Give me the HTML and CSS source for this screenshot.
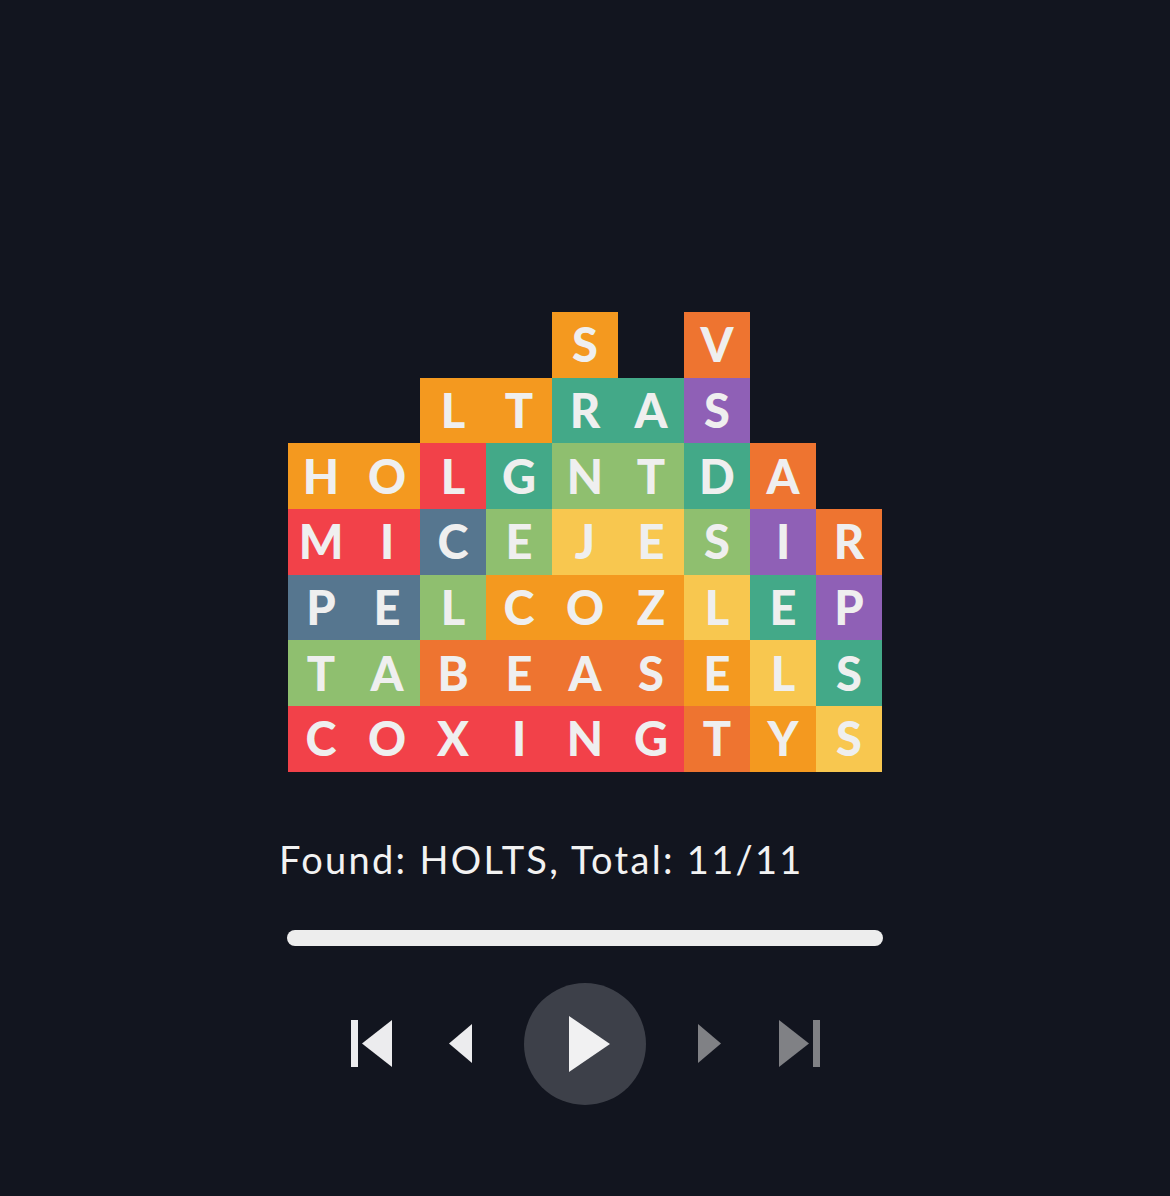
FILE: index.html
```html
<!DOCTYPE html>
<html lang="en">
<head>
<meta charset="utf-8">
<title>Word Puzzle</title>
<link rel="stylesheet" href="styles.css">
</head>
<body>
<main class="app">
  <section class="board">
    <div class="cell"></div><div class="cell"></div><div class="cell"></div><div class="cell"></div>
    <div class="cell orange">S</div><div class="cell"></div><div class="cell dorange">V</div><div class="cell"></div><div class="cell"></div>

    <div class="cell"></div><div class="cell"></div>
    <div class="cell orange">L</div><div class="cell orange">T</div><div class="cell teal">R</div><div class="cell teal">A</div><div class="cell purple">S</div>
    <div class="cell"></div><div class="cell"></div>

    <div class="cell orange">H</div><div class="cell orange">O</div><div class="cell red">L</div><div class="cell teal">G</div><div class="cell green">N</div><div class="cell green">T</div><div class="cell teal">D</div><div class="cell dorange">A</div><div class="cell"></div>

    <div class="cell red">M</div><div class="cell red">I</div><div class="cell slate">C</div><div class="cell green">E</div><div class="cell yellow">J</div><div class="cell yellow">E</div><div class="cell green">S</div><div class="cell purple">I</div><div class="cell dorange">R</div>

    <div class="cell slate">P</div><div class="cell slate">E</div><div class="cell green">L</div><div class="cell orange">C</div><div class="cell orange">O</div><div class="cell orange">Z</div><div class="cell yellow">L</div><div class="cell teal">E</div><div class="cell purple">P</div>

    <div class="cell green">T</div><div class="cell green">A</div><div class="cell dorange">B</div><div class="cell dorange">E</div><div class="cell dorange">A</div><div class="cell dorange">S</div><div class="cell orange">E</div><div class="cell yellow">L</div><div class="cell teal">S</div>

    <div class="cell red">C</div><div class="cell red">O</div><div class="cell red">X</div><div class="cell red">I</div><div class="cell red">N</div><div class="cell red">G</div><div class="cell dorange">T</div><div class="cell orange">Y</div><div class="cell yellow">S</div>
  </section>

  <section class="status">
    <p class="found">Found: HOLTS, Total: 11/11</p>
    <div class="progress"></div>
  </section>

  <nav class="controls">
    <button class="btn skip-back" aria-label="First">
      <svg width="41" height="47" viewBox="0 0 41 47"><rect x="0" y="0" width="7" height="47" fill="#ECECEE"/><polygon points="11,23.5 41,0 41,47" fill="#ECECEE"/></svg>
    </button>
    <button class="btn prev" aria-label="Previous">
      <svg width="23" height="39" viewBox="0 0 23 39"><polygon points="0,19.5 23,0 23,39" fill="#ECECEE"/></svg>
    </button>
    <button class="btn play" aria-label="Play">
      <svg width="41" height="56" viewBox="0 0 41 56"><polygon points="0,0 41,28 0,56" fill="#F1F1F2"/></svg>
    </button>
    <button class="btn next" aria-label="Next">
      <svg width="23" height="39" viewBox="0 0 23 39"><polygon points="0,0 23,19.5 0,39" fill="#808185"/></svg>
    </button>
    <button class="btn skip-fwd" aria-label="Last">
      <svg width="41" height="47" viewBox="0 0 41 47"><polygon points="0,0 30,23.5 0,47" fill="#808185"/><rect x="34" y="0" width="7" height="47" fill="#808185"/></svg>
    </button>
  </nav>
</main>
</body>
</html>
```
FILE: styles.css
```css
html, body {
  margin: 0;
  padding: 0;
  background: #12151F;
}

.app {
  width: 1170px;
  height: 1196px;
  display: flex;
  flex-direction: column;
  align-items: center;
  padding-top: 312px;
  box-sizing: border-box;
}

.board {
  display: grid;
  grid-template-columns: repeat(9, 66px);
  grid-auto-rows: 65.7px;
}

.cell {
  display: flex;
  align-items: center;
  justify-content: center;
  font-family: "Lato", "Open Sans", sans-serif;
  font-weight: 900;
  font-size: 47px;
  color: #EFEFEF;
  line-height: 1;
}

.orange { background: #F4991F; }
.dorange { background: #EE7430; }
.teal { background: #43A988; }
.purple { background: #8F60B6; }
.red { background: #F24149; }
.green { background: #8FBF6F; }
.slate { background: #56768F; }
.yellow { background: #F8C74F; }

.status {
  width: 612px;
  display: flex;
  flex-direction: column;
  margin-top: 64px;
}

.found {
  margin: 0;
  font-family: "Lato", sans-serif;
  font-weight: 400;
  font-size: 38px;
  line-height: 46px;
  color: #F2F2F2;
  letter-spacing: 2.3px;
}

.progress {
  margin: 48px 0 0 8px;
  width: 596px;
  height: 16px;
  border-radius: 8px;
  background: #EDEDED;
}

.controls {
  display: flex;
  align-items: center;
  margin-top: 37px;
  margin-left: 1px;
}

.btn {
  border: 0;
  padding: 0;
  background: none;
  display: flex;
  align-items: center;
  justify-content: center;
}

.btn svg { display: block; }

.prev { margin-left: 57px; }

.play {
  margin-left: 52px;
  width: 122px;
  height: 122px;
  border-radius: 50%;
  background: #3D4049;
  padding-left: 9px;
  box-sizing: border-box;
}

.next { margin-left: 52px; }
.skip-fwd { margin-left: 58px; }
```
